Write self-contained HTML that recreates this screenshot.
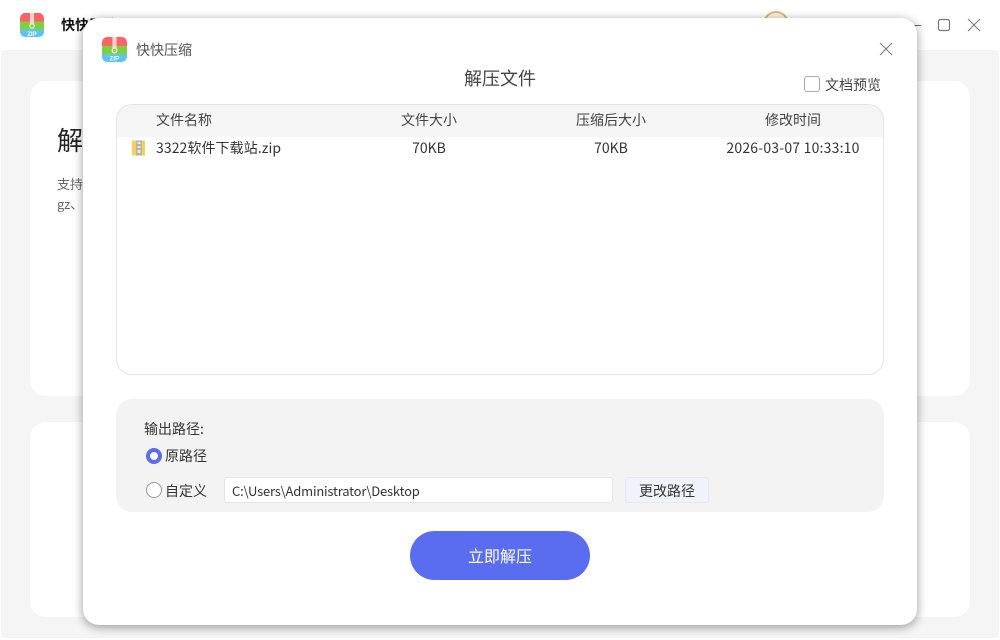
<!DOCTYPE html>
<html lang="zh">
<head>
<meta charset="utf-8">
<style>
html,body{margin:0;padding:0;width:1000px;height:640px;overflow:hidden;background:#fff}
body{position:relative;font-family:"Noto Sans CJK SC","Liberation Sans",sans-serif;color:#333}
.a{position:absolute;white-space:nowrap}
.t{position:absolute;white-space:nowrap;line-height:20px;height:20px}
.c{text-align:center}
</style>
</head>
<body>
<!-- background app -->
<div class="a" style="left:1px;top:50px;width:998px;height:588px;background:#f5f5f5"></div>
<div class="a" style="left:30px;top:81px;width:940px;height:315px;background:#fff;border-radius:16px"></div>
<div class="a" style="left:30px;top:422px;width:940px;height:195px;background:#fff;border-radius:16px"></div>
<svg class="a" style="left:20px;top:13px" width="24" height="24" viewBox="0 0 24 24"><use href="#zip"/></svg>
<div class="t" style="left:61px;top:15px;font-size:14px;font-weight:700;color:#111">快快压缩</div>
<div class="t" style="left:57px;top:125px;font-size:26px;line-height:30px;height:30px;color:#222">解压文件</div>
<div class="t" style="left:57px;top:174px;font-size:13px;color:#666">支持</div>
<div class="t" style="left:57px;top:194px;font-size:13px;color:#666">gz、</div>
<div class="a" style="left:763px;top:11px;width:26px;height:26px;border:2px solid #e0b878;border-radius:50%;background:#fdf3dc;box-sizing:border-box"></div>
<div class="a" style="left:912px;top:25px;width:9px;height:1px;background:#666"></div>
<svg class="a" style="left:936px;top:17px" width="16" height="16" viewBox="0 0 16 16"><rect x="2.500" y="2.500" width="11" height="11" rx="2" fill="none" stroke="#777" stroke-width="1.200"/></svg>
<svg class="a" style="left:966px;top:17px" width="16" height="16" viewBox="0 0 16 16"><path d="M2 2L14 14M14 2L2 14" fill="none" stroke="#777" stroke-width="1"/></svg>

<!-- dialog -->
<div class="a" style="left:83px;top:18px;width:834px;height:607px;background:#fff;border-radius:16px;box-shadow:0 2px 10px rgba(0,0,0,.4)"></div>
<svg class="a" style="left:102px;top:37px" width="25" height="25" viewBox="0 0 24 24">
<defs><g id="zip">
<clipPath id="r"><rect width="24" height="24" rx="5"/></clipPath>
<g clip-path="url(#r)">
<rect width="24" height="9" fill="#fb6367"/>
<rect y="8.500" width="24" height="8.500" fill="#7fcf3f"/>
<rect y="16.500" width="24" height="7.500" fill="#5cc4f5"/>
<rect x="10" y="0" width="4" height="11" fill="#f6d5d0"/>
<circle cx="12" cy="13" r="2.200" fill="#7fcf3f" stroke="#f2f7e8" stroke-width="1.200"/>
<text x="12" y="22.800" font-size="6" font-weight="700" fill="#fff" text-anchor="middle" font-family="Liberation Sans">ZIP</text>
</g></g></defs>
<use href="#zip"/></svg>
<div class="t" style="left:136px;top:40px;font-size:14px;color:#555">快快压缩</div>
<svg class="a" style="left:878px;top:41px" width="16" height="16" viewBox="0 0 16 16"><path d="M2 2L14 14M14 2L2 14" fill="none" stroke="#777" stroke-width="1"/></svg>
<div class="t c" style="left:83px;width:834px;top:66px;line-height:24px;height:24px;font-size:18px;color:#444">解压文件</div>
<div class="a" style="left:804px;top:76px;width:16px;height:16px;box-sizing:border-box;border:1.500px solid #aaa;border-radius:3px;background:#fff"></div>
<div class="t" style="left:825px;top:75px;font-size:14px;color:#444">文档预览</div>

<!-- table -->
<div class="a" style="left:116px;top:104px;width:768px;height:271px;box-sizing:border-box;border:1px solid #e4e4e4;border-radius:16px;overflow:hidden;background:#fff">
<div style="height:32px;background:#f5f5f6"></div>
</div>
<div class="t" style="left:156px;top:110px;font-size:14px;color:#444">文件名称</div>
<div class="t c" style="left:369px;width:120px;top:110px;font-size:14px;color:#444">文件大小</div>
<div class="t c" style="left:551px;width:120px;top:110px;font-size:14px;color:#444">压缩后大小</div>
<div class="t c" style="left:733px;width:120px;top:110px;font-size:14px;color:#444">修改时间</div>
<svg class="a" style="left:131px;top:140px" width="15" height="16" viewBox="0 0 15 16"><path d="M1 0.500H14V15.500H1Z" fill="#f7cf5e"/><rect x="5" y="0.500" width="6" height="15" fill="#b5b5a5"/><rect x="6.500" y="2" width="3" height="2" fill="#e8e8e8"/><rect x="6.500" y="6" width="3" height="2" fill="#e8e8e8"/><rect x="6.500" y="10" width="3" height="3" fill="#e8e8e8"/></svg>
<div class="t" style="left:156px;top:138px;font-size:14px;color:#333;letter-spacing:.08px">3322软件下载站.zip</div>
<div class="t c" style="left:369px;width:120px;top:138px;font-size:14px;color:#333">70KB</div>
<div class="t c" style="left:551px;width:120px;top:138px;font-size:14px;color:#333">70KB</div>
<div class="t c" style="left:703px;width:180px;top:138px;font-size:14px;color:#333;letter-spacing:.2px">2026-03-07 10:33:10</div>

<!-- output -->
<div class="a" style="left:116px;top:399px;width:768px;height:113px;background:#f3f3f3;border-radius:16px"></div>
<div class="t" style="left:144px;top:419px;font-size:14px;color:#333">输出路径:</div>
<div class="a" style="left:146px;top:448px;width:16px;height:16px;box-sizing:border-box;border-radius:50%;border:4.500px solid #5a6df0;background:#fff"></div>
<div class="t" style="left:165px;top:446px;font-size:14px;color:#333">原路径</div>
<div class="a" style="left:146px;top:482px;width:16px;height:16px;box-sizing:border-box;border-radius:50%;border:1.500px solid #999;background:#fff"></div>
<div class="t" style="left:165px;top:481px;font-size:14px;color:#333">自定义</div>
<div class="a" style="left:224px;top:477px;width:389px;height:26px;box-sizing:border-box;border:1px solid #e6e6e6;border-radius:3px;background:#fff"></div>
<div class="t" style="left:232px;top:481px;font-size:13px;color:#333;letter-spacing:-.2px">C:\Users\Administrator\Desktop</div>
<div class="a" style="left:625px;top:477px;width:84px;height:26px;box-sizing:border-box;border:1px solid #e8e8ee;border-radius:3px;background:#f1f3fc"></div>
<div class="t c" style="left:625px;width:84px;top:481px;font-size:14px;color:#333">更改路径</div>

<div class="a" style="left:410px;top:531px;width:180px;height:49px;border-radius:25px;background:#5a6df0"></div>
<div class="t c" style="left:410px;width:180px;top:545px;font-size:16px;color:#fff">立即解压</div>
</body>
</html>
